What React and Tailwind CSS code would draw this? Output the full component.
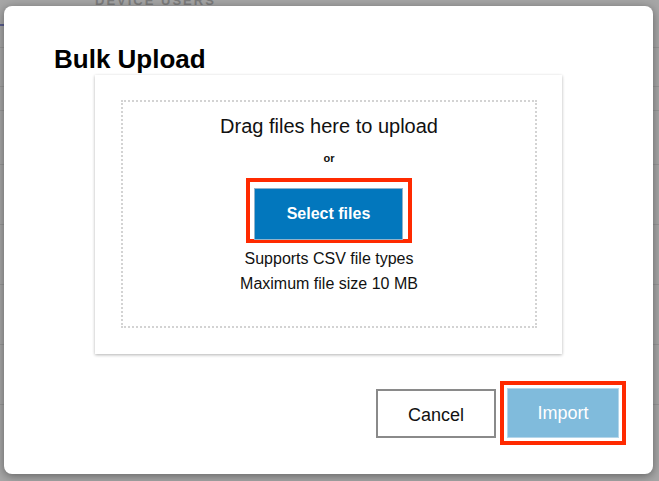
import React from "react";

const font = { fontFamily: '"Liberation Sans", Arial, sans-serif' };

const BackdropPage = () => (
  <div className="w-full h-full flex flex-col">
    {/* faint page behind overlay */}
    <div className="h-[24px] relative overflow-hidden">
      <span className="absolute left-[95px] top-[-9px] text-[13px] font-bold tracking-[2px] text-[#7d7d7d]">
        DEVICE USERS
      </span>
    </div>
    <div className="h-[2px] w-[12px] bg-[#5b5f8e]" />
    <div className="h-[22px] border-b border-[#979797]" />
    <div className="h-[39px] border-b border-[#979797]" />
    <div className="h-[24px] border-b border-[#979797]" />
    <div className="h-[54px] border-b border-[#979797]" />
    <div className="h-[60px] border-b border-[#979797]" />
    <div className="h-[60px] border-b border-[#979797]" />
    <div className="h-[60px] border-b border-[#979797]" />
    <div className="h-[60px] border-b border-[#979797]" />
  </div>
);

const App = () => {
  return (
    <div
      className="relative w-[659px] h-[481px] overflow-hidden bg-[#a6a6a6]"
      style={font}
    >
      <BackdropPage />

      {/* --- MODAL --- */}
      <div className="absolute left-[4px] top-[6px] w-[649px] h-[468px] bg-white rounded-[8px] shadow-[0_2px_10px_rgba(0,0,0,0.4)] flex flex-col">
        <h2 className="pt-[38px] pl-[50px] text-[26px] leading-[30px] font-bold text-black">
          Bulk Upload
        </h2>

        {/* upload card */}
        <div className="ml-[91px] mt-[1px] w-[467px] h-[279px] bg-white shadow-[0_1px_3px_rgba(0,0,0,0.3)] pt-[25px] pl-[26px]">
          <div className="w-[416px] h-[228px] border-2 border-dotted border-[#d3d3d3] flex flex-col items-center pt-[12px]">
            <p className="text-[20px] leading-[24px] text-[#111]">
              Drag files here to upload
            </p>
            <p className="mt-[13px] text-[11px] leading-[14px] font-bold text-[#111]">
              or
            </p>
            <div className="mt-[13px] border-4 border-[#ff2a00] pt-[6px] pl-[4px] pr-[5px] w-[166px] h-[65px]">
              <button className="w-[149px] h-[52px] bg-[#0277bd] border border-[#8fb3cc] text-white text-[16px] font-bold">
                Select files
              </button>
            </div>
            <p className="mt-[3px] text-[16px] leading-[25px] text-[#111]">
              Supports CSV file types
            </p>
            <p className="text-[16px] leading-[25px] text-[#111]">
              Maximum file size 10 MB
            </p>
          </div>
        </div>

        {/* actions */}
        <div className="mt-[27px] flex justify-end items-center pr-[27px]">
          <button className="w-[120px] h-[49px] border-2 border-[#8a8a8a] bg-white text-[18px] text-[#111] mr-[4px] pt-[4px]">
            Cancel
          </button>
          <div className="border-4 border-[#ff2a00] p-[3px]">
            <button className="w-[112px] h-[50px] bg-[#80bbdc] border border-[#b5d6ea] text-[18px] text-white">
              Import
            </button>
          </div>
        </div>
      </div>
    </div>
  );
};

export default App;
